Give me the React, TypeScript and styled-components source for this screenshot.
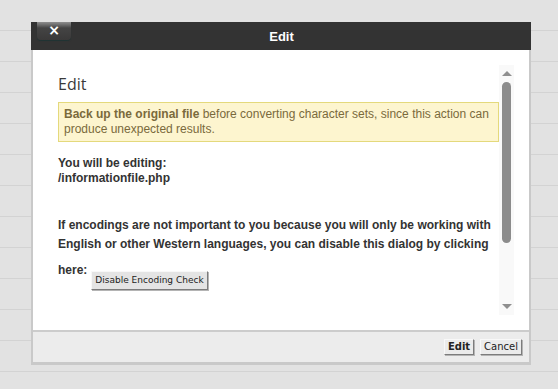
import React from "react";
import styled, { createGlobalStyle } from "styled-components";

const Global = createGlobalStyle`
  html, body {
    margin: 0;
    padding: 0;
    width: 558px;
    height: 389px;
    overflow: hidden;
  }
  body {
    background-color: #e2e2e2;
    background-image: repeating-linear-gradient(
      to bottom,
      transparent 0px,
      transparent 30px,
      #d3d3d3 30px,
      #d3d3d3 31px
    );
    font-family: "Liberation Sans", Arial, sans-serif;
  }
`;

const Backdrop = styled.div`
  padding: 22px 0 0 31px;
`;

const Dialog = styled.div`
  width: 500px;
  display: flex;
  flex-direction: column;
`;

const TitleBar = styled.div`
  height: 28px;
  background: #333333;
  display: grid;
  grid-template-columns: 1fr auto 1fr;
  align-items: center;
  padding: 0 5px 0 6px;
`;

const CloseButton = styled.button`
  justify-self: start;
  align-self: start;
  width: 34px;
  height: 18px;
  margin: 0;
  padding: 0 0 3px;
  border: none;
  border-radius: 0 0 4px 4px;
  background: linear-gradient(
    to bottom,
    #8e8e8e 0px,
    #6a6a6a 3px,
    #444 6px,
    #3a3939 100%
  );
  box-shadow: 0 1px 1px #1f3434;
  color: #ffffff;
  font-family: "DejaVu Sans", sans-serif;
  font-weight: bold;
  font-size: 14px;
  line-height: 14px;
  display: flex;
  align-items: center;
  justify-content: center;
`;

const Title = styled.div`
  color: #ffffff;
  font-family: "Liberation Sans", Arial, sans-serif;
  font-weight: bold;
  font-size: 13px;
`;

const Panel = styled.div`
  border: 2px solid #c9c9c9;
  border-top: none;
  border-bottom-width: 3px;
  display: flex;
  flex-direction: column;
`;

const Body = styled.div`
  background: #ffffff;
  height: 250px;
  padding: 15px;
  display: flex;
  border-bottom: 2px solid #cccccc;
`;

const ScrollContent = styled.div`
  flex: 1;
  overflow: hidden;
  padding: 8px 0 0 10px;
  color: #333333;
  font-family: "Liberation Sans", Arial, sans-serif;
  font-size: 12px;
`;

const Heading = styled.h2`
  margin: 0 0 7px;
  font-family: "Open Sans", sans-serif;
  font-weight: 400;
  font-size: 16px;
  line-height: 22px;
  color: #3a3a3a;
`;

const Warning = styled.div`
  border: 1px solid #e4d97c;
  background: #fdf5cf;
  color: #7a6a3c;
  padding: 4px 5px;
  font-size: 12px;
  line-height: 15px;
`;

const Info = styled.div<{ $gap?: number; $lh?: number }>`
  margin-top: ${(p) => p.$gap ?? 0}px;
  font-weight: bold;
  font-size: 12px;
  line-height: ${(p) => p.$lh ?? 15}px;
  color: #333333;
`;

const Track = styled.div`
  width: 15px;
  background: #f9f9f9;
  display: flex;
  flex-direction: column;
  align-items: center;
  padding: 6px 0 6px;
  box-sizing: border-box;
`;

const Arrow = styled.div<{ $down?: boolean }>`
  width: 0;
  height: 0;
  border-left: 5px solid transparent;
  border-right: 5px solid transparent;
  ${(p) =>
    p.$down
      ? "border-top: 5px solid #8f8f8f; margin-top: auto;"
      : "border-bottom: 5px solid #8f8f8f;"}
`;

const Thumb = styled.div`
  width: 9px;
  height: 161px;
  margin-top: 6px;
  border-radius: 5px;
  background: #8c8c8c;
`;

const Footer = styled.div`
  height: 30px;
  background: #ececec;
  display: flex;
  justify-content: flex-end;
  align-items: center;
  gap: 6px;
  padding-right: 7px;
`;

const RaisedButton = styled.button<{ $bold?: boolean; $small?: boolean }>`
  margin: 0;
  box-sizing: border-box;
  height: ${(p) => (p.$small ? 19 : 16)}px;
  padding: 0 3px;
  background: ${(p) => (p.$small ? "#e4e4e4" : "#ebebeb")};
  border: 1px solid;
  border-color: #f8f8f8 #7c7c7c #7c7c7c #f8f8f8;
  box-shadow: 1px 1px 0 #b4b4b4;
  font-family: "DejaVu Sans", Tahoma, sans-serif;
  font-size: ${(p) => (p.$small ? 9 : 10)}px;
  font-weight: ${(p) => (p.$bold ? "bold" : "normal")};
  color: #222222;
  line-height: 1;
`;

const InlineButton = styled(RaisedButton)`
  vertical-align: -9px;
  margin: 17px 0 0 4px;
`;

export default function App() {
  return (
    <>
      <Global />
      <Backdrop>
        <Dialog>
          <TitleBar>
            <CloseButton aria-label="Close">×</CloseButton>
            <Title>Edit</Title>
            <span />
          </TitleBar>
          <Panel>
            <Body>
              <ScrollContent>
                <Heading>Edit</Heading>
                <Warning>
                  <b>Back up the original file</b> before converting character
                  sets, since this action can produce unexpected results.
                </Warning>
                <Info $gap={14}>
                  You will be editing:
                  <br />
                  /informationfile.php
                </Info>
                <Info $gap={30} $lh={19}>
                  If encodings are not important to you because you will only be
                  working with English or other Western languages, you can
                  disable this dialog by clicking here:
                  <InlineButton $small>Disable Encoding Check</InlineButton>
                </Info>
                <Info $gap={21} $lh={19}>
                  Please select the encoding to use when opening this file:
                </Info>
              </ScrollContent>
              <Track>
                <Arrow />
                <Thumb />
                <Arrow $down />
              </Track>
            </Body>
            <Footer>
              <RaisedButton $bold>Edit</RaisedButton>
              <RaisedButton>Cancel</RaisedButton>
            </Footer>
          </Panel>
        </Dialog>
      </Backdrop>
    </>
  );
}
